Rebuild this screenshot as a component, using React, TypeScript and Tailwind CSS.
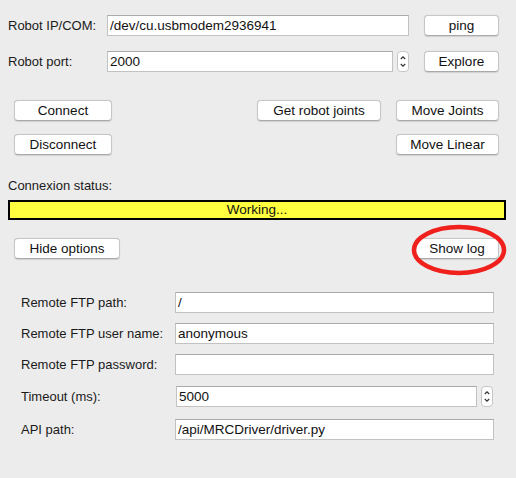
import type { ReactNode } from "react";

// Robot connection panel (Qt-on-macOS look).

const font = "font-['Liberation_Sans','Helvetica_Neue',Arial,sans-serif]";

function Btn({ children, className = "" }: { children: ReactNode; className?: string }) {
  return (
    <button
      className={`flex h-[21px] items-center justify-center rounded-[4px] border border-[#c6c6c6] border-b-[#a9a9a9] bg-white text-[13.5px] leading-none text-[#111] shadow-[0_0.5px_1px_rgba(0,0,0,0.12)] ${className}`}
    >
      {children}
    </button>
  );
}

function Field({ value, className = "" }: { value: string; className?: string }) {
  return (
    <div
      className={`flex h-[21px] items-center border border-[#c2c2c2] border-t-[#aaaaaa] bg-white pl-[2px] text-[13.5px] leading-none text-[#111] ${className}`}
    >
      {value}
    </div>
  );
}

function Spinner() {
  return (
    <div className="ml-[4px] flex h-[21px] w-[12px] items-center justify-center rounded-[4px] border border-[#c6c6c6] bg-white">
      <svg width="8" height="15" viewBox="0 0 8 15" fill="none" stroke="#333" strokeWidth="1.2">
        <path d="M1.8 5 L4 2.8 L6.2 5" />
        <path d="M1.8 10 L4 12.2 L6.2 10" />
      </svg>
    </div>
  );
}

function Label({ children, className = "" }: { children: ReactNode; className?: string }) {
  return <span className={`text-[13px] leading-none text-[#1a1a1a] ${className}`}>{children}</span>;
}

function OptionRow({ label, children, className = "" }: { label: string; children: ReactNode; className?: string }) {
  return (
    <div className={`flex h-[21px] items-center ${className}`}>
      <Label className="w-[154px] shrink-0">{label}</Label>
      {children}
    </div>
  );
}

export default function App() {
  return (
    <div className={`flex h-[478px] w-[516px] flex-col bg-[#ececec] ${font}`}>
      <div className="mt-[15px] flex h-[21px] items-center">
        <Label className="ml-[8px] w-[99px]">Robot IP/COM:</Label>
        <Field value="/dev/cu.usbmodem2936941" className="w-[302px]" />
        <Btn className="ml-[15px] w-[75px]">ping</Btn>
      </div>

      <div className="mt-[15px] flex h-[21px] items-center">
        <Label className="ml-[8px] w-[99px]">Robot port:</Label>
        <Field value="2000" className="w-[286px]" />
        <Spinner />
        <Btn className="ml-[15px] w-[75px]">Explore</Btn>
      </div>

      <div className="mt-[28px] flex h-[21px] items-center">
        <Btn className="ml-[14px] w-[98px]">Connect</Btn>
        <Btn className="ml-[145px] w-[124px]">Get robot joints</Btn>
        <Btn className="ml-[15px] w-[103px]">Move Joints</Btn>
      </div>

      <div className="mt-[13px] flex h-[21px] items-center">
        <Btn className="ml-[14px] w-[98px]">Disconnect</Btn>
        <Btn className="ml-[284px] w-[103px]">Move Linear</Btn>
      </div>

      <div className="mt-[22px] flex h-[16px] items-center">
        <Label className="ml-[8px]">Connexion status:</Label>
      </div>

      <div className="ml-[8px] mt-[7px] flex h-[20px] w-[498px] items-center justify-center border-2 border-black bg-[#ffff40] text-[13.5px] leading-none text-[#111]">
        Working...
      </div>

      <div className="mt-[18px] flex h-[21px] items-center">
        <Btn className="ml-[14px] w-[106px]">Hide options</Btn>
        <div className="relative ml-[295px]">
          <Btn className="w-[84px]">Show log</Btn>
          <svg
            className="pointer-events-none absolute left-[-6px] top-[-16px]"
            width="100"
            height="56"
            viewBox="0 0 100 56"
            fill="none"
          >
            <ellipse cx="50" cy="28" rx="45" ry="23" stroke="#f0201c" strokeWidth="4.5" />
          </svg>
        </div>
      </div>

      <div className="ml-[21px] mt-[33px] flex flex-col">
        <OptionRow label="Remote FTP path:">
          <Field value="/" className="w-[319px]" />
        </OptionRow>
        <OptionRow label="Remote FTP user name:" className="mt-[10px]">
          <Field value="anonymous" className="w-[319px]" />
        </OptionRow>
        <OptionRow label="Remote FTP password:" className="mt-[10px]">
          <Field value="" className="w-[319px]" />
        </OptionRow>
        <OptionRow label="Timeout (ms):" className="mt-[11px]">
          <Field value="5000" className="ml-[1px] w-[301px]" />
          <Spinner />
        </OptionRow>
        <OptionRow label="API path:" className="mt-[12px]">
          <Field value="/api/MRCDriver/driver.py" className="w-[319px]" />
        </OptionRow>
      </div>
    </div>
  );
}
